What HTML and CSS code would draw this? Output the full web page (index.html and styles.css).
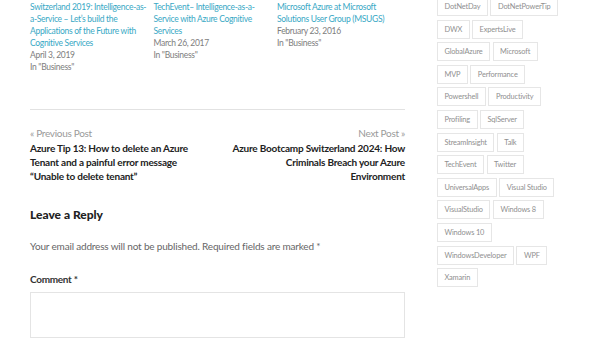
FILE: index.html
```html
<!DOCTYPE html>
<html lang="en">
<head>
<meta charset="utf-8">
<title>Post</title>
<link rel="stylesheet" href="styles.css">
</head>
<body>
<div class="page">
  <main class="content">
    <section class="related">
      <div class="rel-item">
        <a class="rel-title" href="#">Switzerland 2019: Intelligence-as-a-Service – Let’s build the Applications of the Future with Cognitive Services</a>
        <div class="rel-meta">April 3, 2019</div>
        <div class="rel-meta">In "Business"</div>
      </div>
      <div class="rel-item">
        <a class="rel-title" href="#">TechEvent– Intelligence-as-a-Service with Azure Cognitive Services</a>
        <div class="rel-meta">March 26, 2017</div>
        <div class="rel-meta">In "Business"</div>
      </div>
      <div class="rel-item">
        <a class="rel-title" href="#">Microsoft Azure at Microsoft Solutions User Group (MSUGS)</a>
        <div class="rel-meta">February 23, 2016</div>
        <div class="rel-meta">In "Business"</div>
      </div>
    </section>

    <nav class="post-nav">
      <div class="nav-prev">
        <div class="nav-label">« Previous Post</div>
        <a class="nav-title" href="#">Azure Tip 13: How to delete an Azure Tenant and a painful error message “Unable to delete tenant”</a>
      </div>
      <div class="nav-next">
        <div class="nav-label">Next Post »</div>
        <a class="nav-title" href="#">Azure Bootcamp Switzerland 2024: How Criminals Breach your Azure Environment</a>
      </div>
    </nav>

    <section class="reply">
      <h3 class="reply-title">Leave a Reply</h3>
      <p class="reply-notes">Your email address will not be published. Required fields are marked *</p>
      <label class="reply-label" for="comment">Comment *</label>
      <textarea id="comment" class="reply-box"></textarea>
    </section>
  </main>

  <aside class="sidebar">
    <div class="tags">
      <a class="tag" href="#">DotNetDay</a>
      <a class="tag" href="#">DotNetPowerTip</a>
      <a class="tag" href="#">DWX</a>
      <a class="tag" href="#">ExpertsLive</a>
      <a class="tag" href="#">GlobalAzure</a>
      <a class="tag" href="#">Microsoft</a>
      <a class="tag" href="#">MVP</a>
      <a class="tag" href="#">Performance</a>
      <a class="tag" href="#">Powershell</a>
      <a class="tag" href="#">Productivity</a>
      <a class="tag" href="#">Profiling</a>
      <a class="tag" href="#">SqlServer</a>
      <a class="tag" href="#">StreamInsight</a>
      <a class="tag" href="#">Talk</a>
      <a class="tag" href="#">TechEvent</a>
      <a class="tag" href="#">Twitter</a>
      <a class="tag" href="#">UniversalApps</a>
      <a class="tag" href="#">Visual Studio</a>
      <a class="tag" href="#">VisualStudio</a>
      <a class="tag" href="#">Windows 8</a>
      <a class="tag" href="#">Windows 10</a>
      <a class="tag" href="#">WindowsDeveloper</a>
      <a class="tag" href="#">WPF</a>
      <a class="tag" href="#">Xamarin</a>
    </div>
  </aside>
</div>
</body>
</html>
```

FILE: styles.css
```css
html, body {
  margin: 0;
  padding: 0;
  background: #ffffff;
  overflow: hidden;
}

body {
  font-family: "Lato", "Open Sans", sans-serif;
  color: #555;
}

a {
  text-decoration: none;
}

.page {
  display: flex;
  align-items: flex-start;
  gap: 32px;
  padding: 0 0 0 30px;
}

.content {
  width: 375px;
  flex: none;
}

/* related posts */
.related {
  display: grid;
  grid-template-columns: 120px 120px 120px;
  column-gap: 3.5px;
  padding-top: 1px;
  padding-bottom: 36px;
  border-bottom: 1px solid #e2e2e2;
}

.rel-item {
  font-size: 8.5px;
  line-height: 12px;
  letter-spacing: -0.3px;
}

.rel-title {
  display: block;
  color: #38a8c5;
}

.rel-meta {
  color: #7d7d7d;
}

/* post navigation */
.post-nav {
  display: flex;
  justify-content: space-between;
  gap: 20px;
  padding-top: 17px;
}

.nav-prev {
  width: 176px;
}

.nav-next {
  width: 173.5px;
  text-align: right;
}

.nav-label {
  font-size: 10px;
  line-height: 12px;
  letter-spacing: -0.3px;
  color: #9a9a9a;
  margin-bottom: 2px;
}

.nav-title {
  display: block;
  font-size: 10px;
  line-height: 14px;
  letter-spacing: -0.22px;
  font-weight: 700;
  color: #222;
}

/* reply */
.reply-title {
  margin: 24px 0 0;
  font-size: 12px;
  line-height: 16px;
  font-weight: 900;
  color: #222;
}

.reply-notes {
  margin: 16px 0 0;
  font-size: 10px;
  line-height: 14px;
  letter-spacing: -0.18px;
  color: #666;
}

.reply-label {
  display: block;
  margin-top: 19px;
  font-size: 10px;
  line-height: 14px;
  letter-spacing: -0.3px;
  font-weight: 700;
  color: #333;
}

.reply-box {
  display: block;
  box-sizing: border-box;
  width: 375px;
  height: 46px;
  margin-top: 6px;
  border: 1px solid #e4e4e4;
  resize: none;
}

/* sidebar */
.sidebar {
  width: 123px;
  flex: none;
  margin-top: -3px;
}

.tags {
  display: flex;
  flex-wrap: wrap;
  gap: 3.6px 2.5px;
}

.tag {
  display: block;
  box-sizing: border-box;
  height: 19px;
  padding: 0 6.5px;
  border: 1px solid #e6e6e6;
  font-size: 7.4px;
  line-height: 17px;
  letter-spacing: -0.15px;
  color: #8f8f8f;
}
```
